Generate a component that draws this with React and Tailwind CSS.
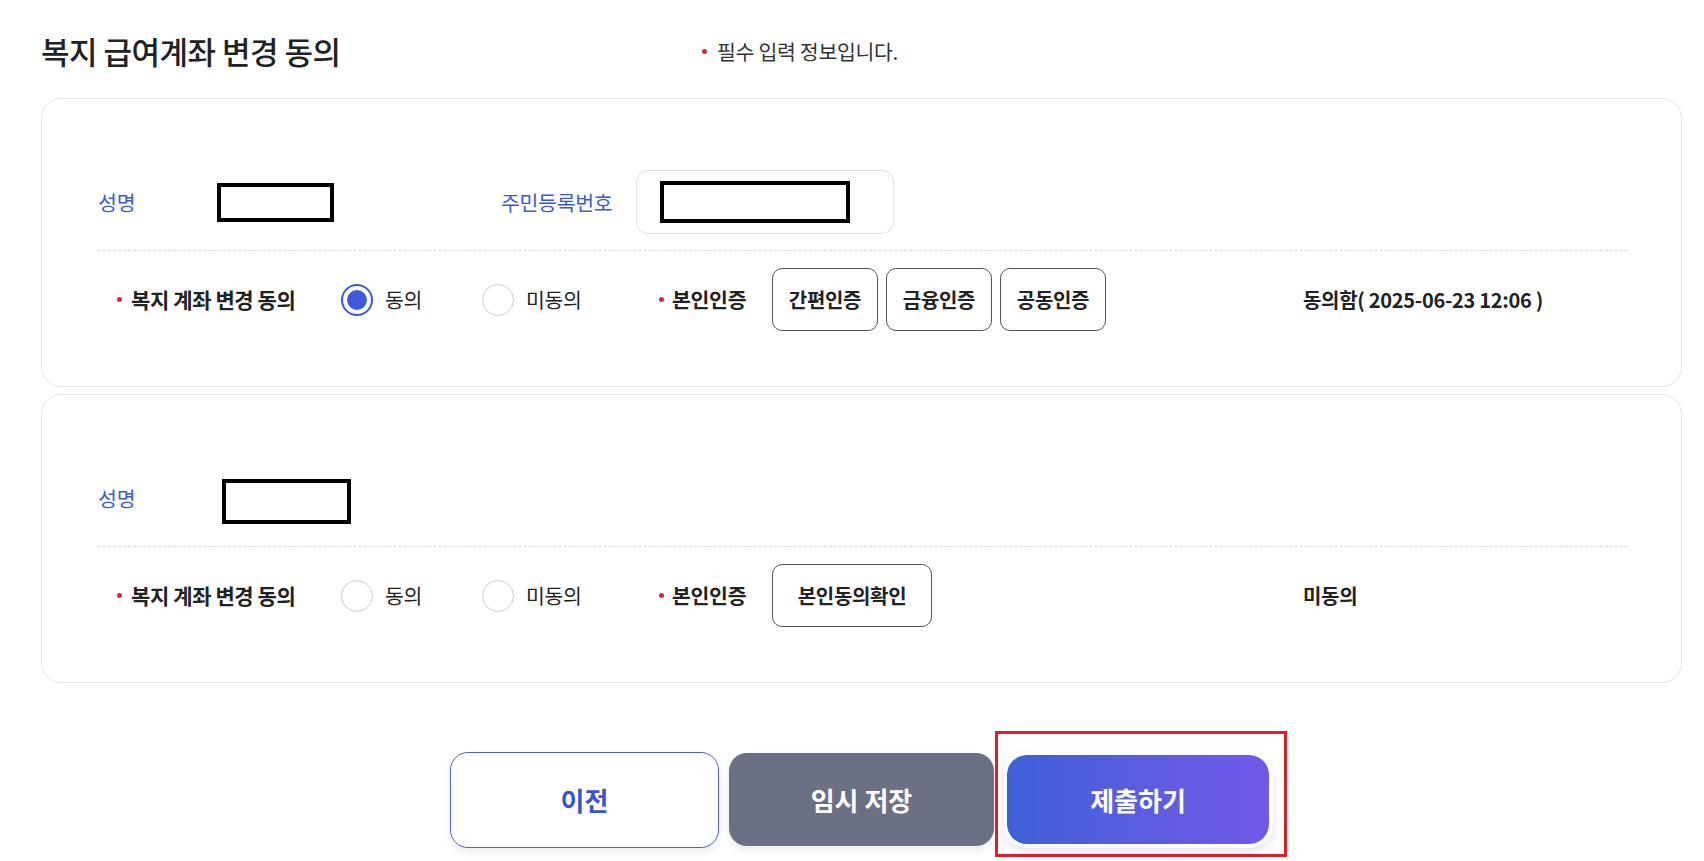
import React from 'react';

const font = { fontFamily: '"Noto Sans CJK KR", "Noto Sans", sans-serif' };

const Dot = () => <span className="inline-block w-[5px] h-[5px] rounded-full bg-[#d9263a] shrink-0" />;

const Radio = ({ checked, label, width }) => (
  <div className={`flex items-center ${width}`}>
    {checked ? (
      <span className="w-[32px] h-[32px] rounded-full border-2 border-[#3b5bdb] flex items-center justify-center shrink-0">
        <span className="w-[20px] h-[20px] rounded-full bg-[#3b5bdb]" />
      </span>
    ) : (
      <span className="w-[32px] h-[32px] rounded-full border-[1.5px] border-[#cfcfcf] shrink-0" />
    )}
    <span className="ml-[12px] text-[20.5px] text-[#222] tracking-[-0.3px]">{label}</span>
  </div>
);

const AuthButton = ({ children, w = 'w-[106px]' }) => (
  <button className={`${w} h-[63px] rounded-[10px] border border-[#555] bg-white text-[20px] font-bold text-[#222] tracking-[-0.3px]`}>
    {children}
  </button>
);

const ConsentRow = ({ agreed, buttons, status }) => (
  <div className="flex h-[63px] items-center pl-[19px]">
    <div className="flex w-[224px] items-center">
      <Dot />
      <span className="ml-[9px] text-[21px] font-bold text-[#222] tracking-[-0.4px]">복지 계좌 변경 동의</span>
    </div>
    <Radio checked={agreed} label="동의" width="w-[141px]" />
    <Radio checked={false} label="미동의" width="w-[177px]" />
    <div className="flex w-[113px] items-center">
      <Dot />
      <span className="ml-[8px] text-[20.5px] font-bold text-[#222] tracking-[-0.3px]">본인인증</span>
    </div>
    <div className="flex w-[531px] items-center gap-[8px]">{buttons}</div>
    <span className="text-[20px] font-bold text-[#222] tracking-[-0.3px]">{status}</span>
  </div>
);

const Card = ({ top, bottom, className = '' }) => (
  <div className={`rounded-[20px] border border-[#e4e4e4] bg-white pl-[56px] pr-[53px] pt-[71px] pb-[55px] ${className}`}>
    <div className="flex h-[64px] items-center">{top}</div>
    <div className="mt-[16px] mb-[17px] border-t border-dashed border-[#d9d9d9]" />
    {bottom}
  </div>
);

const BlackBox = ({ w, h }) => <div className={`${w} ${h} border-4 border-black bg-white`} />;

export default function App() {
  return (
    <div className="w-full h-[861px] bg-white pl-[41px] pr-[22px] overflow-hidden" style={font}>
      <div className="flex h-[98px] items-center pt-[4px]">
        <h1 className="w-[661px] text-[31px] font-medium text-[#222] tracking-[-0.5px]">복지 급여계좌 변경 동의</h1>
        <div className="flex items-center">
          <Dot />
          <span className="ml-[10px] text-[20.5px] text-[#333] tracking-[-0.3px]">필수 입력 정보입니다.</span>
        </div>
      </div>

      <Card
        top={
          <>
            <span className="w-[119px] text-[20.5px] text-[#3b5bd6]">성명</span>
            <BlackBox w="w-[117px]" h="h-[39px]" />
            <span className="ml-[167px] w-[135px] text-[20.5px] text-[#3b5bd6] tracking-[-0.3px]">주민등록번호</span>
            <div className="flex h-[64px] w-[258px] items-center rounded-[12px] border border-[#e2e2e2] pl-[23px]">
              <BlackBox w="w-[190px]" h="h-[42px]" />
            </div>
          </>
        }
        bottom={
          <ConsentRow
            agreed
            buttons={
              <>
                <AuthButton>간편인증</AuthButton>
                <AuthButton>금융인증</AuthButton>
                <AuthButton>공동인증</AuthButton>
              </>
            }
            status="동의함( 2025-06-23 12:06 )"
          />
        }
      />

      <Card
        className="mt-[7px]"
        top={
          <>
            <span className="w-[124px] text-[20.5px] text-[#3b5bd6]">성명</span>
            <div className="mt-[6px]">
              <BlackBox w="w-[129px]" h="h-[45px]" />
            </div>
          </>
        }
        bottom={
          <ConsentRow
            agreed={false}
            buttons={<AuthButton w="w-[160px]">본인동의확인</AuthButton>}
            status="미동의"
          />
        }
      />

      <div className="mt-[68px] flex items-center justify-center">
        <button className="h-[96px] w-[269px] rounded-[18px] border border-[#4a63c8] bg-white text-[26px] font-bold text-[#3656cf] shadow-[0_4px_8px_rgba(0,0,0,0.08)]">
          이전
        </button>
        <button className="ml-[10px] h-[93px] w-[265px] rounded-[18px] bg-[#6c7084] text-[26px] font-bold text-white shadow-[0_4px_8px_rgba(0,0,0,0.08)]">
          임시 저장
        </button>
        <div className="relative ml-[9px]">
          <div className="rounded-[24px] bg-white p-[4px] shadow-[0_4px_10px_rgba(80,80,160,0.15)]">
            <button className="h-[89px] w-[262px] rounded-[20px] bg-gradient-to-r from-[#3e5fd8] to-[#7159e8] text-[26px] font-bold text-white">
              제출하기
            </button>
          </div>
          <div className="absolute -left-[8px] -right-[14px] -top-[20px] -bottom-[9px] border-[3px] border-[#e21d2a] pointer-events-none" />
        </div>
      </div>
    </div>
  );
}
